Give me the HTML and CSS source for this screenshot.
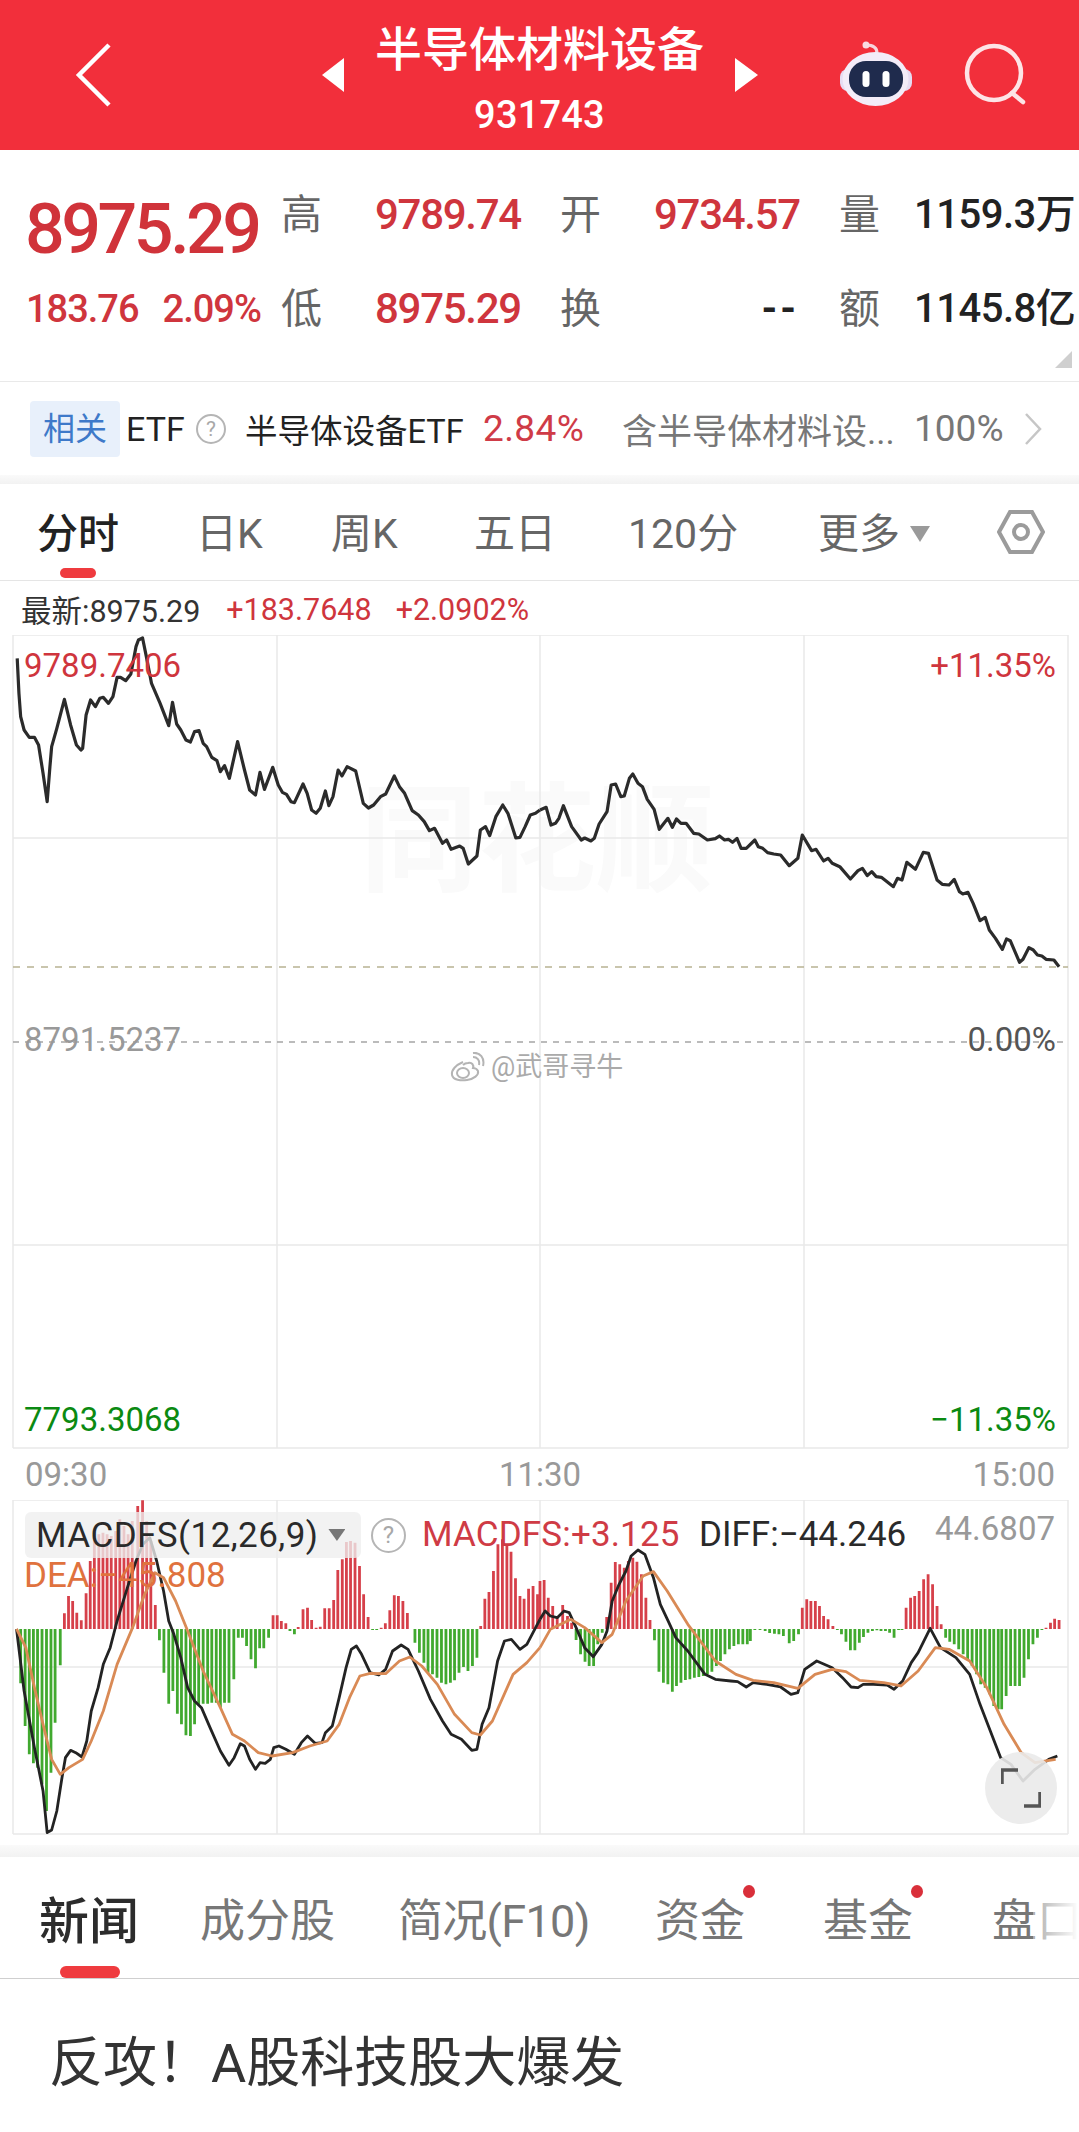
FILE: index.html
```html
<!DOCTYPE html>
<html lang="zh">
<head>
<meta charset="utf-8">
<title>半导体材料设备</title>
<link rel="stylesheet" href="styles.css">
</head>
<body>
<header class="top">
  <svg class="back" width="40" height="66" viewBox="0 0 40 66"><path d="M35 3 5 33l30 30"/></svg>
  <span class="tri tri-l"></span>
  <div class="title-block">
    <div class="title">半导体材料设备</div>
    <div class="code">931743</div>
  </div>
  <span class="tri tri-r"></span>
  <svg class="robot" width="74" height="68" viewBox="838 42 74 68">
    <path class="ant" d="M866 46c6 0 11 2 11 8"/>
    <circle class="ant-ball" cx="866" cy="46" r="3.5"/>
    <rect class="ear" x="840" y="70" width="72" height="22" rx="8"/>
    <ellipse class="head" cx="875.500" cy="80" rx="33" ry="27"/>
    <rect class="face" x="849" y="62" width="54" height="36" rx="17"/>
    <rect class="eye" x="862.500" y="72" width="7" height="16" rx="3.500"/>
    <rect class="eye" x="882.500" y="72" width="7" height="16" rx="3.500"/>
  </svg>
  <svg class="search" width="72" height="72" viewBox="960 42 72 72"><circle cx="994" cy="76" r="27"/><path d="m1012 96 11 9"/></svg>
</header>

<section class="stats">
  <div class="price">8975.29</div>
  <div class="lab">高</div><div class="val up">9789.74</div>
  <div class="lab">开</div><div class="val up">9734.57</div>
  <div class="lab">量</div><div class="val dark">1159.3万</div>
  <div class="change"><span>183.76</span><span>2.09%</span></div>
  <div class="lab">低</div><div class="val up">8975.29</div>
  <div class="lab">换</div><div class="val dark dash">--</div>
  <div class="lab">额</div><div class="val dark">1145.8亿</div>
  <span class="corner"></span>
</section>

<section class="etf">
  <span class="tag">相关</span>
  <span class="etf-word">ETF</span>
  <span class="qmark q-etf">?</span>
  <span class="etf-name">半导体设备ETF</span>
  <span class="etf-pct">2.84%</span>
  <span class="etf-desc">含半导体材料设...</span>
  <span class="etf-full">100%</span>
  <svg class="etf-arrow" width="18" height="32" viewBox="0 0 18 32"><path d="m2 1 14 15L2 31"/></svg>
</section>
<div class="band"></div>

<nav class="ktabs">
  <span class="ktab active">分时</span>
  <span class="ktab">日K</span>
  <span class="ktab">周K</span>
  <span class="ktab">五日</span>
  <span class="ktab">120分</span>
  <span class="ktab more">更多<i class="more-tri"></i></span>
  <svg class="hex" width="48" height="46" viewBox="0 0 48 46"><path d="M13 3h22l11 20-11 20H13L2 23z"/><circle cx="24" cy="23" r="7"/></svg>
</nav>

<section class="chart-wrap">
  <div class="legend">
    <span class="leg-now">最新:8975.29</span>
    <span class="leg-up">+183.7648</span>
    <span class="leg-up">+2.0902%</span>
  </div>

  <div class="chart">
    <div class="brand">同花顺</div>
    <svg class="plot" width="1079" height="814" viewBox="0 635 1079 814">
      <path class="grid" d="M13 635V1448M277 635V1448M540 635V1448M804 635V1448M1068 635V1448M13 635H1068M13 838H1068M13 1245H1068M13 1448H1068"/>
      <path class="dash-tan" d="M13 967H1068"/>
      <path class="dash-grey" d="M13 1042H1068"/>
      <g transform="translate(0 600) scale(.34435 .33333)">
        <polyline class="line-price" points="50,175 55,280 60,350 70,390 85,412 100,412 112,435 125,520 137,605 145,500 150,440 165,385 187,298 205,375 222,435 235,450 240,445 250,345 263,300 277,320 290,295 300,292 315,310 328,290 340,232 350,232 365,242 380,222 395,140 402,120 414,114 425,170 440,250 465,310 490,377 501,307 513,372 525,390 540,420 553,426 565,395 578,392 590,430 600,440 615,472 630,482 640,515 652,497 666,535 690,425 710,510 725,570 742,585 755,517 768,568 792,502 808,555 820,577 832,583 845,605 855,608 880,552 892,580 905,630 918,640 930,625 945,573 955,617 967,590 982,510 993,528 1008,500 1033,513 1055,610 1070,624 1085,615 1105,590 1120,582 1145,528 1160,560 1175,580 1197,632 1215,645 1232,665 1247,692 1262,685 1285,730 1297,720 1310,748 1335,738 1345,745 1360,792 1385,768 1395,690 1410,680 1422,707 1440,650 1460,615 1475,640 1498,714 1510,712 1525,680 1540,645 1555,640 1568,630"/>
      </g>
      <g transform="translate(540 600) scale(.34376 .33333)">
        <polyline class="line-price" points="0,630 18,622 32,675 45,670 55,655 68,617 92,680 120,720 130,714 148,723 158,715 172,672 195,635 207,555 220,552 235,590 245,588 260,535 270,522 285,550 298,560 312,598 332,628 347,688 372,655 385,682 397,657 410,670 425,670 447,700 462,702 487,720 510,716 522,708 537,720 548,718 560,727 573,715 585,745 600,745 625,720 635,740 648,745 662,758 680,762 700,765 725,797 750,775 763,705 790,752 803,748 825,783 838,775 850,790 872,800 903,837 925,812 938,805 952,827 965,815 978,830 993,832 1028,860 1040,835 1053,840 1067,787 1092,808 1115,757 1130,760 1155,840 1170,853 1190,855 1205,838 1220,875 1230,882 1245,877 1260,910 1280,962 1295,952 1307,990 1325,1015 1345,1048 1357,1017 1368,1022 1395,1087 1405,1078 1422,1043 1435,1050 1447,1065 1460,1068 1472,1078 1495,1080 1510,1100"/>
      </g>
    </svg>
    <span class="lbl lbl-left lbl-top up">9789.7406</span>
    <span class="lbl lbl-right lbl-top up">+11.35%</span>
    <span class="lbl lbl-left lbl-mid grey">8791.5237</span>
    <span class="lbl lbl-right lbl-mid dim">0.00%</span>
    <span class="lbl lbl-left lbl-low green">7793.3068</span>
    <span class="lbl lbl-right lbl-low green">−11.35%</span>
    <div class="weibo">
      <svg width="36" height="30" viewBox="0 0 36 30"><path d="M14 10C7 13 2 18 3 23c1 5 9 6 15 5 7-1 12-5 11-9-1-2-3-3-5-3 1-3-1-6-5-5-2 0-4 1-5 2"/><ellipse cx="14" cy="21" rx="6" ry="5"/><path d="M24 5c4 0 7 3 6 8M24 1c7-1 12 5 10 13"/></svg>
      <span>@武哥寻牛</span>
    </div>
  </div>

  <div class="times"><span>09:30</span><span>11:30</span><span>15:00</span></div>

  <div class="macd">
    <svg class="plot" width="1079" height="335" viewBox="0 1499 1079 335">
      <path class="grid" d="M13 1499V1833M277 1499V1833M540 1499V1833M804 1499V1833M1068 1499V1833M13 1499H1068M13 1666H1068M13 1833H1068"/>
      <g transform="translate(0 1430) scale(.34435 .33333)">
        <path class="bar-green" d="M60 594V757M73 594V885M85 594V970M97 594V997M109 594V1010M122 594V1060M135 594V1140M148 594V1025M160 594V875M175 594V703M463 594V628M476 594V725M490 594V818M502 594V780M515 594V848M527 594V880M540 594V913M553 594V915M565 594V880M577 594V820M590 594V818M603 594V818M615 594V815M628 594V815M640 594V830M652 594V815M665 594V815M679 594V745M692 594V620M704 594V620M716 594V645M729 594V685M742 594V712M754 594V652M766 594V652M780 594V620M842 594V600M855 594V610M1082 594V597M1094 594V597M1205 594V635M1218 594V665M1231 594V695M1243 594V725M1256 594V730M1269 594V740M1282 594V755M1295 594V760M1308 594V755M1320 594V748M1333 594V725M1346 594V708M1359 594V720M1372 594V705M1385 594V680"/>
        <path class="bar-red" d="M187 594V547M199 594V495M211 594V510M223 594V545M236 594V568M250 594V487M262 594V390M274 594V320M287 594V310M299 594V305M311 594V310M323 594V315M336 594V300M348 594V265M360 594V285M372 594V310M384 594V270M400 594V225M414 594V208M426 594V270M438 594V330M451 594V522M793 594V553M805 594V553M817 594V570M830 594V577M866 594V588M880 594V535M893 594V530M905 594V567M918 594V590M930 594V587M943 594V532M956 594V532M969 594V507M981 594V417M994 594V385M1006 594V333M1018 594V330M1031 594V335M1044 594V405M1056 594V490M1069 594V558M1107 594V590M1119 594V577M1132 594V538M1145 594V493M1157 594V495M1170 594V510M1183 594V546M1396 594V585M1408 594V503M1420 594V483M1433 594V420M1446 594V340M1459 594V325M1472 594V340M1484 594V362M1497 594V442M1510 594V495M1522 594V503M1535 594V473M1548 594V465M1561 594V490"/>
      </g>
      <g transform="translate(540 1430) scale(.34376 .33333)">
        <path class="bar-red" d="M0 594V450M12 594V447M24 594V500M37 594V525M50 594V560M66 594V522M80 594V555M92 594V575M194 594V558M207 594V455M219 594V393M232 594V400M245 594V410M257 594V390M270 594V380M282 594V392M295 594V430M308 594V500M320 594V567M763 594V530M776 594V505M788 594V510M801 594V510M813 594V525M825 594V555M838 594V565M852 594V585M1065 594V530M1078 594V500M1090 594V495M1103 594V480M1116 594V445M1129 594V430M1142 594V460M1155 594V525M1167 594V580M1472 594V590M1485 594V575M1497 594V563M1510 594V567"/>
        <path class="bar-green" d="M105 594V627M118 594V670M131 594V692M143 594V705M156 594V705M168 594V640M181 594V605M333 594V628M346 594V722M359 594V755M372 594V760M385 594V782M397 594V765M410 594V755M423 594V747M436 594V745M449 594V740M462 594V738M475 594V735M487 594V730M500 594V722M513 594V705M525 594V690M538 594V670M551 594V655M564 594V645M577 594V640M590 594V640M603 594V640M612 594V630M625 594V597M640 594V597M655 594V600M668 594V606M682 594V608M695 594V610M708 594V615M725 594V637M738 594V630M752 594V610M865 594V597M877 594V610M890 594V632M903 594V658M916 594V658M929 594V635M941 594V618M954 594V605M967 594V600M980 594V598M992 594V600M1005 594V600M1017 594V605M1030 594V620M1043 594V597M1053 594V597M1180 594V620M1192 594V632M1205 594V640M1218 594V655M1231 594V670M1244 594V685M1257 594V705M1270 594V730M1282 594V760M1295 594V770M1308 594V790M1320 594V825M1333 594V835M1343 594V835M1356 594V795M1369 594V765M1382 594V765M1395 594V765M1408 594V740M1421 594V685M1434 594V640M1447 594V620M1460 594V597"/>
      </g>
      <g transform="translate(0 1430) scale(.34435 .33333)">
        <polyline class="line-diff" points="48,594 70,780 100,950 125,1080 137,1205 150,1197 165,1140 180,1040 190,980 205,958 220,965 238,978 252,930 265,840 285,770 300,700 320,650 340,570 370,470 395,390 415,340 435,320 455,390 475,480 490,570 505,610 525,680 545,770 565,810 585,830 610,890 640,960 665,1003 680,980 698,938 710,945 725,985 742,1015 755,995 770,997 785,985 795,950 810,945 830,955 855,970 875,935 893,915 915,937 935,935 945,905 965,885 985,800 1005,710 1020,655 1035,645 1050,670 1075,725 1100,732 1120,715 1140,660 1165,642 1185,655 1215,720 1250,805 1285,870 1310,910 1340,925 1370,958 1385,955 1400,880 1420,830 1445,690 1465,630 1485,625 1510,655 1530,640 1568,565"/>
        <polyline class="line-dea" points="48,594 75,650 100,770 125,880 150,985 175,1030 200,1010 240,985 265,930 300,840 340,700 385,590 420,490 450,425 475,440 510,510 545,600 590,720 640,830 675,910 710,930 750,965 790,975 850,965 900,945 950,930 985,880 1015,800 1045,735 1075,727 1120,728 1160,690 1190,678 1225,705 1270,760 1320,850 1370,905 1395,912 1430,870 1490,730 1530,695 1568,650"/>
      </g>
      <g transform="translate(540 1430) scale(.34376 .33333)">
        <polyline class="line-diff" points="0,565 15,540 30,555 50,560 70,540 85,545 105,590 130,650 155,677 180,640 195,600 210,510 230,460 250,420 265,375 285,357 305,370 330,440 350,520 375,575 395,620 430,660 480,730 510,745 555,750 575,752 600,768 620,755 660,760 700,768 730,790 750,785 770,715 805,690 850,710 880,740 905,768 925,770 940,760 970,760 1010,762 1030,775 1055,750 1080,695 1100,665 1135,592 1165,650 1210,680 1250,730 1280,820 1310,900 1340,980 1370,1000 1405,1050 1440,1015 1480,985 1505,975"/>
        <polyline class="line-dea" points="0,650 30,595 90,565 130,590 180,635 210,610 250,510 300,435 330,422 370,480 430,580 510,690 570,730 620,748 680,755 750,772 800,730 850,715 890,722 930,748 1000,755 1050,765 1100,720 1150,650 1190,655 1250,690 1300,770 1350,880 1400,965 1440,995 1500,985"/>
      </g>
    </svg>
    <div class="chip"><span>MACDFS(12,26,9)</span><i class="chip-tri"></i></div>
    <span class="qmark q-macd">?</span>
    <span class="m-val m-macd">MACDFS:+3.125</span>
    <span class="m-val m-diff">DIFF:−44.246</span>
    <span class="m-val m-max">44.6807</span>
    <span class="m-val m-dea">DEA:−45.808</span>
    <div class="expand">
      <svg width="40" height="40" viewBox="0 0 40 40"><path d="M1 16V2h16M39 24v14H23"/></svg>
    </div>
  </div>
</section>
<div class="band band-2"></div>

<nav class="ntabs">
  <span class="ntab active">新闻</span>
  <span class="ntab">成分股</span>
  <span class="ntab ntab-f10">简况(F10)</span>
  <span class="ntab dot">资金</span>
  <span class="ntab dot">基金</span>
  <span class="ntab">盘口</span>
  <span class="fade"></span>
</nav>

<article class="news">反攻！A股科技股大爆发</article>
</body>
</html>
```
FILE: styles.css
```css
* { box-sizing: border-box; }
html, body { margin: 0; padding: 0; }
body {
  width: 1079px;
  height: 2132px;
  overflow: hidden;
  background: #fff;
  color: #222;
  font-family: Roboto, "Noto Sans CJK SC", sans-serif;
}
i { font-style: normal; display: block; }
.up { color: #cf353d; }
.grey { color: #999; }
.dim { color: #555; }
.green { color: #0b8a12; }

/* header */
.top {
  height: 150px;
  background: #f22f3b;
  display: flex;
  align-items: center;
  color: #fff;
}
.back { margin-left: 74px; fill: none; stroke: #fff; stroke-width: 4.500; }
.tri { width: 0; height: 0; border-top: 17px solid transparent; border-bottom: 17px solid transparent; }
.tri-l { margin-left: 208px; border-right: 22px solid #fff; }
.tri-r { border-left: 23px solid #fff; }
.title-block {
  width: 391px;
  align-self: flex-start;
  padding-top: 18px;
  text-align: center;
}
.title { font-size: 47px; line-height: 64px; font-weight: 500; }
.code { font-size: 38px; line-height: 66px; font-weight: 500; letter-spacing: .2px; }
.robot { margin-left: 80px; }
.ant { fill: none; stroke: #f7d5dc; stroke-width: 3; }
.ant-ball { fill: #f9dbe2; }
.ear { fill: #e6dcf2; }
.head { fill: #f3ecf8; }
.face { fill: #1f2b4d; }
.eye { fill: #fff; }
.search { margin-left: 48px; fill: none; stroke: #fde4e6; stroke-width: 4.500; stroke-linecap: round; }

/* quote stats */
.stats {
  position: relative;
  height: 232px;
  padding: 18px 0 0 25px;
  display: grid;
  grid-template-columns: 257px 94px 185px 94px 185px 75px 1fr;
  grid-auto-rows: 94px;
  align-items: center;
  border-bottom: 1.500px solid #e9e9e9;
}
.price {
  font-size: 70px;
  font-weight: 500;
  color: #d0333a;
  letter-spacing: -3.500px;
  line-height: 70px;
  padding-top: 28px;
}
.change { display: flex; gap: 24px; font-size: 38px; font-weight: 500; color: #cf353d; letter-spacing: -1px; padding-left: 1px; }
.lab { font-size: 41px; color: #666; line-height: 48px; margin-left: -1px; }
.val { font-size: 42px; font-weight: 500; line-height: 48px; white-space: nowrap; letter-spacing: -1.300px; margin-left: -1px; }
.dark { color: #222; font-size: 40px; letter-spacing: -.5px; }
.dash { justify-self: end; margin-right: 41px; letter-spacing: 3px; font-weight: 700; }
.corner {
  position: absolute;
  right: 7px;
  bottom: 13px;
  width: 17px;
  height: 17px;
  background: #cfcfcf;
  clip-path: polygon(100% 0, 100% 100%, 0 100%);
}

/* etf row */
.etf {
  height: 93px;
  display: flex;
  align-items: center;
  padding-left: 30px;
  font-size: 34px;
  white-space: nowrap;
}
.tag {
  width: 90px;
  height: 56px;
  border-radius: 4px;
  background: #e8f0fb;
  color: #3e79c9;
  font-size: 32px;
  line-height: 56px;
  text-align: center;
}
.etf-word { margin-left: 6px; width: 70px; }
.qmark {
  display: block;
  border: 2px solid #b5b5b5;
  border-radius: 50%;
  color: #a8a8a8;
  text-align: center;
}
.q-etf { width: 30px; height: 30px; font-size: 21px; line-height: 26px; }
.etf-name { margin-left: 19px; width: 238px; font-size: 32.500px; }
.etf-pct { color: #cf3b47; width: 139px; font-size: 37px; letter-spacing: .4px; }
.etf-desc { color: #777; width: 292px; font-size: 35px; }
.etf-full { color: #777; width: 110px; font-size: 37px; }
.etf-arrow { fill: none; stroke: #c6c6c6; stroke-width: 2.500; }

.band {
  height: 9px;
  background: linear-gradient(#fafafa, #f2f2f2);
}

/* period tabs */
.ktabs {
  height: 97px;
  padding: 4px 0 0 37px;
  display: grid;
  grid-template-columns: 159px 135px 143px 154px 190px 179px 48px;
  align-items: center;
  border-bottom: 1.500px solid #e5e5e5;
  font-size: 41px;
  color: #666;
}
.ktab { position: relative; white-space: nowrap; line-height: 56px; }
.ktab.active { color: #222; font-weight: 500; }
.ktab.active::after {
  content: "";
  position: absolute;
  left: 23px;
  top: 62px;
  width: 36px;
  height: 10px;
  border-radius: 5px;
  background: #ef3b3f;
}
.more { display: flex; align-items: center; gap: 10px; }
.more-tri { width: 20px; height: 16px; background: #9a9a9a; clip-path: polygon(0 0, 100% 0, 50% 100%); }
.hex { fill: none; stroke: #9b9b9b; stroke-width: 4; margin-top: -4px; }

/* main chart */
.chart-wrap { height: 1264px; }
.legend { height: 54px; padding: 2px 0 0 21px; display: flex; align-items: center; font-size: 30.500px; white-space: nowrap; }
.leg-now { color: #333; margin-right: 26px; }
.leg-up { color: #cf353d; margin-right: 24px; }
.chart { position: relative; height: 814px; }
.plot { display: block; position: relative; }
.grid { fill: none; stroke: #e9e9e9; stroke-width: 1.500; }
.dash-tan { stroke: #b8b392; stroke-width: 1.500; stroke-dasharray: 7 7; }
.dash-grey { stroke: #a5a5a5; stroke-width: 1.500; stroke-dasharray: 6 6; }
.line-price, .line-diff, .line-dea { fill: none; vector-effect: non-scaling-stroke; stroke-linejoin: round; }
.line-price { stroke: #2b2b2b; stroke-width: 3.200; }
.line-diff { stroke: #232323; stroke-width: 2.800; }
.line-dea { stroke: #d98a55; stroke-width: 2.800; }
.bar-red, .bar-green { fill: none; vector-effect: non-scaling-stroke; stroke-width: 2.800; }
.bar-red { stroke: #d6404a; }
.bar-green { stroke: #41a92f; }
.brand {
  position: absolute;
  left: 360px;
  top: 148px;
  font-size: 118px;
  line-height: 118px;
  font-weight: 700;
  color: #fafafa;
  white-space: nowrap;
}
.lbl { position: absolute; font-size: 33px; line-height: 40px; white-space: nowrap; }
.lbl-left { left: 24px; }
.lbl-right { right: 23px; }
.lbl-top { top: 11px; }
.lbl-mid { top: 385px; }
.lbl-low { top: 765px; }
.weibo {
  position: absolute;
  left: 449px;
  top: 417px;
  display: flex;
  align-items: center;
  gap: 6px;
  font-size: 27px;
  line-height: 30px;
  color: #aaa;
  text-shadow: 0 0 2px #fff;
  white-space: nowrap;
}
.weibo svg { fill: none; stroke: #b4b4b4; stroke-width: 2; }

/* time axis */
.times {
  height: 51px;
  padding: 0 24px 0 25px;
  display: flex;
  justify-content: space-between;
  align-items: center;
  font-size: 33px;
  line-height: 40px;
  color: #999;
}

/* indicator */
.macd { position: relative; height: 335px; }
.chip {
  position: absolute;
  left: 25px;
  top: 12px;
  width: 336px;
  height: 46px;
  padding-left: 11px;
  display: flex;
  align-items: center;
  gap: 10px;
  border-radius: 6px;
  background: rgba(238, 238, 238, .78);
  font-size: 35px;
  letter-spacing: .45px;
  color: #2a2a2a;
  white-space: nowrap;
}
.chip-tri { width: 17px; height: 12px; background: #777; clip-path: polygon(0 0, 100% 0, 50% 100%); }
.q-macd {
  position: absolute;
  left: 371px;
  top: 18px;
  width: 35px;
  height: 35px;
  font-size: 24px;
  line-height: 31px;
}
.m-val { position: absolute; font-size: 35px; line-height: 42px; white-space: nowrap; }
.m-macd { left: 422px; top: 14px; color: #cf3b45; letter-spacing: .15px; }
.m-diff { left: 699px; top: 14px; color: #2a2a2a; }
.m-max { right: 24px; top: 8px; font-size: 33px; color: #999; }
.m-dea { left: 24px; top: 55px; color: #e0723e; }
.expand {
  position: absolute;
  left: 985px;
  top: 252px;
  width: 72px;
  height: 72px;
  border-radius: 50%;
  background: rgba(234, 234, 234, .9);
  display: flex;
  align-items: center;
  justify-content: center;
}
.expand svg { fill: none; stroke: #555; stroke-width: 3.500; }

.band-2 { height: 12px; }

/* news tabs */
.ntabs {
  position: relative;
  height: 122px;
  padding: 32px 0 0 39px;
  display: grid;
  grid-template-columns: 161px 198px 257px 168px 169px 86px;
  align-items: start;
  border-bottom: 1.500px solid #cfcfcf;
  overflow: hidden;
  font-size: 45px;
  color: #777;
  white-space: nowrap;
}
.ntab { position: relative; line-height: 66px; }
.ntab-f10 { letter-spacing: -.7px; }
.ntab.active { font-size: 50px; font-weight: 500; color: #2c2c2c; }
.ntab.active::after {
  content: "";
  position: absolute;
  left: 21px;
  top: 77px;
  width: 60px;
  height: 12px;
  border-radius: 6px;
  background: #ef3b3f;
}
.ntab.dot::after {
  content: "";
  position: absolute;
  left: 88px;
  top: -4px;
  width: 12px;
  height: 13px;
  border-radius: 50%;
  background: #d92f3a;
}
.fade {
  position: absolute;
  right: 0;
  top: 0;
  width: 46px;
  height: 100%;
  background: linear-gradient(90deg, rgba(255,255,255,.4), #fff);
}

.news {
  padding: 55px 0 0 49px;
  font-size: 54px;
  line-height: 60px;
  color: #333;
}
```
